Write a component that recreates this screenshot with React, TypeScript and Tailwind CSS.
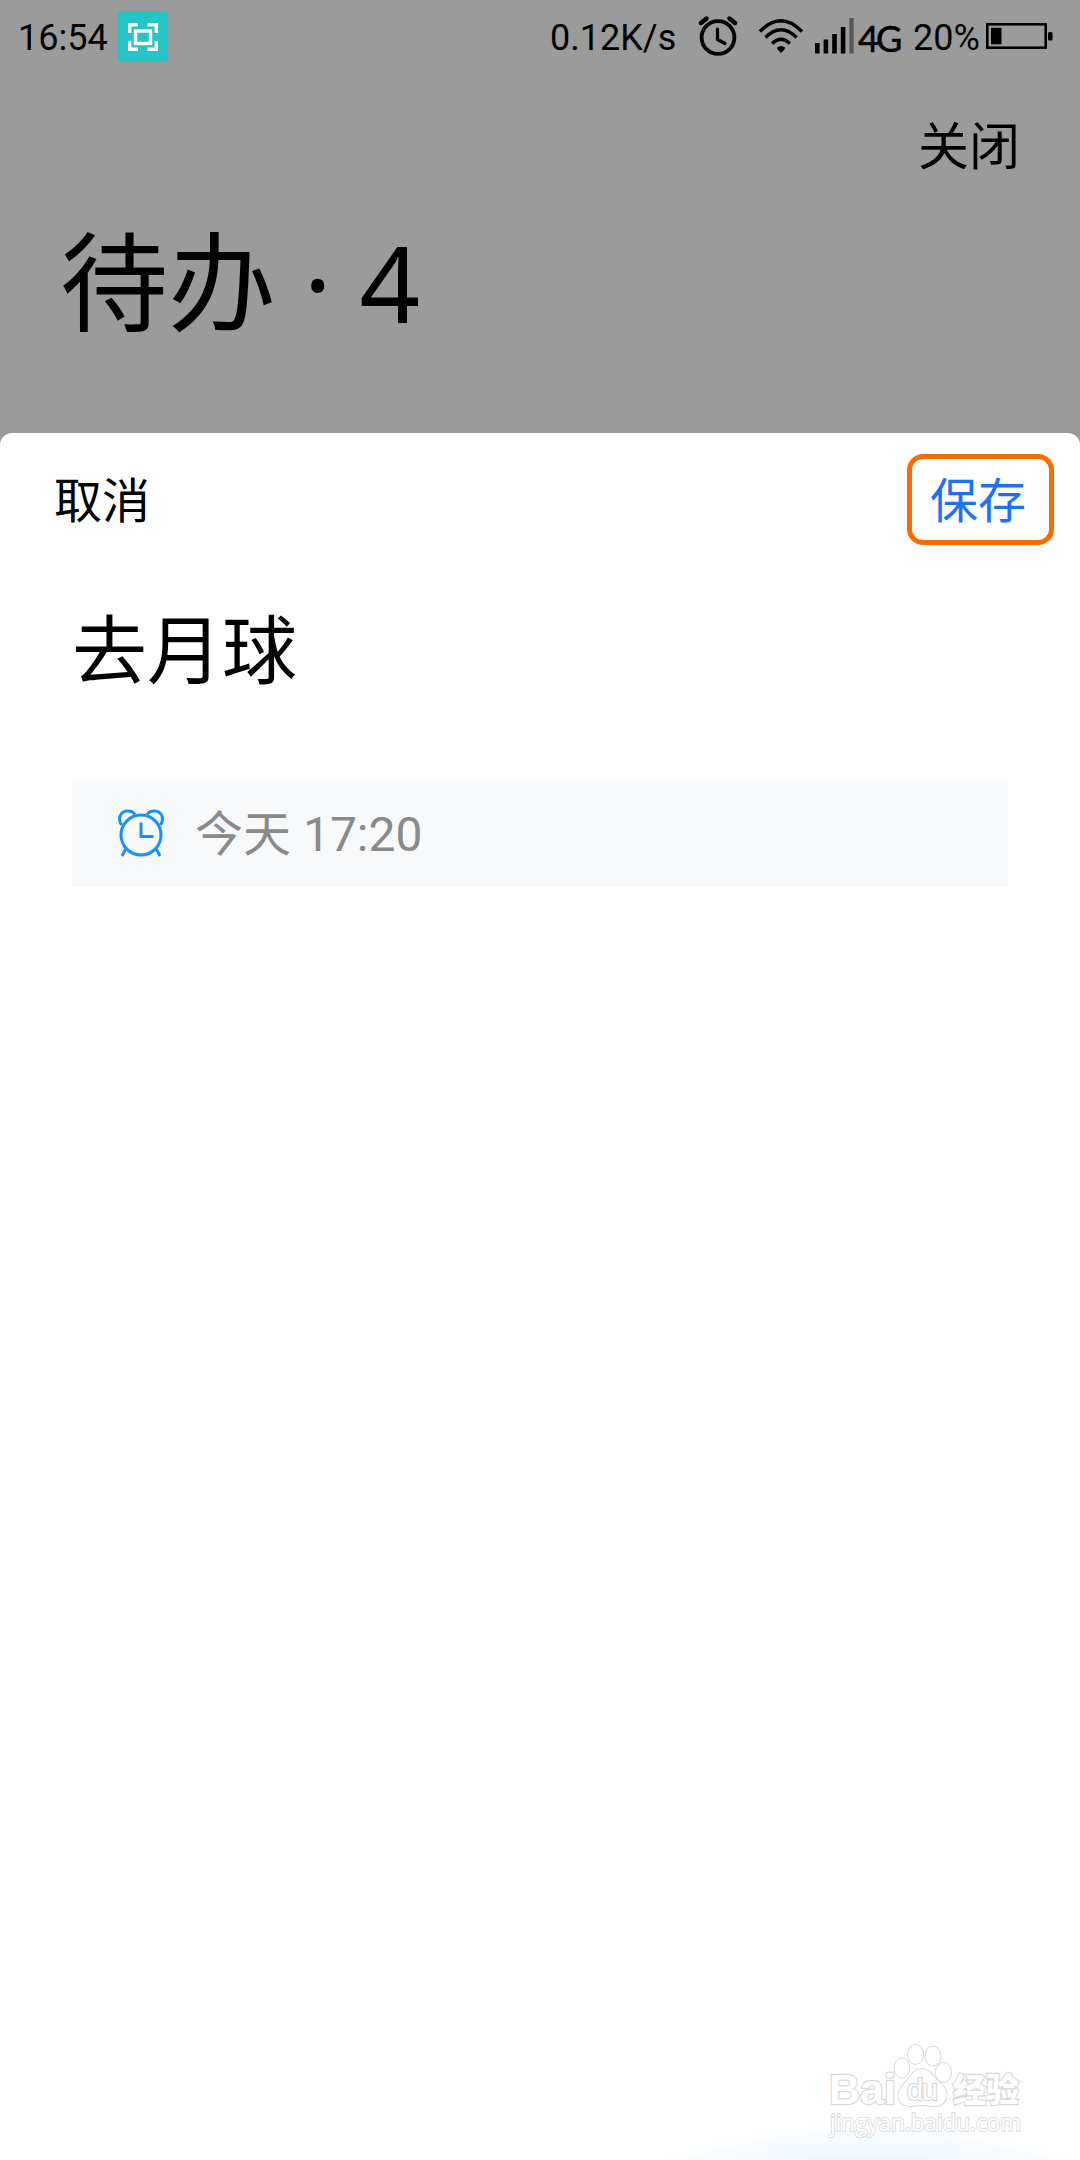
import React, { useState } from "react";

const ScreenshotIcon: React.FC = () => (
  <svg viewBox="0 0 51 51" className="h-[51px] w-[51px]">
    <rect width="51" height="51" rx="4" fill="#26c4c6" />
    <g fill="none" stroke="#fff" strokeWidth="3.400">
      <path d="M12.700 22V13.700H21M30.500 13.700H39.300V22M39.300 30V38.300H30.500M21 38.300H12.700V30" />
      <rect x="18.500" y="20" width="15" height="12.500" />
    </g>
  </svg>
);

const StatusAlarmIcon: React.FC = () => (
  <svg viewBox="0 0 40 42" className="h-[42px] w-[40px]">
    <g fill="none" stroke="#000" strokeLinecap="round">
      <circle cx="20" cy="22.500" r="16.400" strokeWidth="3.800" />
      <path d="M3 8L8.500 3.500M37 8L31.500 3.500" strokeWidth="4.400" />
      <path d="M19.500 14V24.500L27 28.500" strokeWidth="3.200" strokeLinejoin="round" />
    </g>
  </svg>
);

const WifiIcon: React.FC = () => (
  <svg viewBox="0 0 46 36" className="h-[36px] w-[46px]">
    <g fill="none" stroke="#000" strokeWidth="3.400">
      <path d="M2 13.500Q23 -8 44 13.500" />
      <path d="M7.500 19.500Q23 4 38.500 19.500" />
      <path d="M14 25.500Q23 17 32 25.500" />
    </g>
    <path d="M19 29.500Q23 26.500 27 29.500Q27 31.500 23 35Q19 31.500 19 29.500Z" />
  </svg>
);

const SignalIcon: React.FC = () => (
  <svg viewBox="0 0 40 36" className="h-[36px] w-[40px]">
    <rect x="0" y="25" width="4.600" height="10.500" />
    <rect x="8.600" y="21.500" width="4.600" height="14" />
    <rect x="17.200" y="16" width="4.600" height="19.500" />
    <rect x="25.800" y="9" width="4.600" height="26.500" />
    <rect x="34.400" y="0" width="4.300" height="35.500" fill="#575757" />
  </svg>
);

const BatteryIcon: React.FC = () => (
  <svg viewBox="0 0 67 26" className="h-[26px] w-[67px]">
    <rect x="1.300" y="1.300" width="58.400" height="23.400" fill="none" stroke="#000" strokeWidth="2.600" />
    <rect x="5" y="4.800" width="10.500" height="16.500" />
    <rect x="62" y="9" width="4.500" height="8.500" rx="1.500" />
  </svg>
);

const ReminderIcon: React.FC = () => (
  <svg viewBox="0 0 46 48" className="h-[48px] w-[46px]">
    <g fill="none" stroke="#1890ff" strokeWidth="3">
      <circle cx="23" cy="26" r="20" />
      <path d="M3.500 16C-0.500 10 2 2.500 9 2C12.500 1.800 15.500 3 17 5.500" />
      <path d="M42.500 16C46.500 10 44 2.500 37 2C33.500 1.800 30.500 3 29 5.500" />
      <path d="M23 13.500V27.500H35.500" />
      <path d="M8 39.500L4 47M38 39.500L42 47" />
    </g>
  </svg>
);

const Watermark: React.FC = () => (
  <svg viewBox="0 0 200 100" className="h-[100px] w-[200px]">
    <g fill="#fff" stroke="#dadada" strokeWidth="2.400" paintOrder="stroke">
      <text x="1" y="64" fontSize="43" fontWeight="700" fontFamily="Liberation Sans, sans-serif" textLength="67" lengthAdjust="spacingAndGlyphs">
        Bai
      </text>
      <g strokeWidth="2">
        <ellipse cx="74" cy="28" rx="7.500" ry="9.500" />
        <ellipse cx="87.500" cy="14.500" rx="7.500" ry="9.500" />
        <ellipse cx="105" cy="16" rx="7.500" ry="9.500" />
        <ellipse cx="115.500" cy="32.500" rx="7.500" ry="9.500" />
        <path d="M94 29C102 29 106 38 113 44C122 51 120 65 108 66C102 66 99 65 94 65C89 65 87 66 81 66C69 65 68 52 75 45C83 38 85 29 94 29Z" />
      </g>
      <text x="79" y="60" fontSize="29" fontFamily="Liberation Sans, sans-serif" textLength="31">
        du
      </text>
      <text x="125" y="62" fontSize="33" fontWeight="900" fontFamily="Noto Sans CJK SC, sans-serif" textLength="66">
        经验
      </text>
      <text x="2" y="91" fontSize="23" fontFamily="Open Sans, sans-serif" textLength="191" lengthAdjust="spacingAndGlyphs" stroke="#e0e0e0" strokeWidth="2">
        jingyan.baidu.com
      </text>
    </g>
  </svg>
);

const StatusBar: React.FC = () => (
  <div className="flex h-[72px] items-center text-[36px] leading-none">
    <span className="ml-[18px] w-[99px] pt-[3px]">16:54</span>
    <ScreenshotIcon />
    <div className="ml-auto flex items-center">
      <span className="w-[148px] pt-[3px]">0.12K/s</span>
      <StatusAlarmIcon />
      <span className="ml-[20px]">
        <WifiIcon />
      </span>
      <span className="ml-[11px]">
        <SignalIcon />
      </span>
      <span className="ml-[3px] w-[55px] pt-[3px] font-[Lato,sans-serif] font-normal tracking-[-3px] [-webkit-text-stroke:0.6px_black]">
        4G
      </span>
      <span className="w-[73px] pt-[3px]">20%</span>
      <BatteryIcon />
    </div>
    <span className="w-[27px]" />
  </div>
);

const App: React.FC = () => {
  const [title] = useState<string>("去月球");
  const [reminder] = useState<string>("今天 17:20");
  const todoCount = 4;

  return (
    <div className="flex h-[2160px] w-[1080px] flex-col overflow-hidden bg-[#9b9b9b] font-[Roboto,'Noto_Sans_CJK_SC',sans-serif] text-black">
      <StatusBar />
      <div className="flex h-[361px] flex-col">
        <button className="mt-[50px] mr-[60px] self-end text-[51px] leading-none">
          关闭
        </button>
        <h1 className="mt-[55px] ml-[60px] font-['Noto_Sans','Noto_Sans_CJK_SC',sans-serif] text-[108px] leading-none">
          待办<span className="text-[106px]"> · {todoCount}</span>
        </h1>
      </div>
      <div className="flex grow flex-col rounded-t-[12px] bg-white">
        <div className="mt-[21px] flex h-[91px] items-center justify-between pr-[26px] pl-[54px] text-[48px] leading-none">
          <button className="pt-[4px]">取消</button>
          <button className="h-[91px] w-[147px] rounded-[16px] border-5 border-[#ff6a00] pt-[4px] pr-[5px] text-[#1f6fff]">
            保存
          </button>
        </div>
        <h2 className="mt-[70px] ml-[72px] text-[75px] leading-none">{title}</h2>
        <div className="mx-[72px] mt-[89px] flex h-[108px] items-center bg-[#f8f9fb] pl-[46px] text-[48px] leading-none text-[#8a8a8a]">
          <ReminderIcon />
          <span className="ml-[31px] pt-[3px]">{reminder}</span>
        </div>
        <div className="mt-auto flex h-[130px] justify-end bg-[radial-gradient(circle_at_867px_715px,#edf6fe_583px,#fff_625px)] pt-[10px] pr-[52px]">
          <Watermark />
        </div>
      </div>
    </div>
  );
};

export default App;
